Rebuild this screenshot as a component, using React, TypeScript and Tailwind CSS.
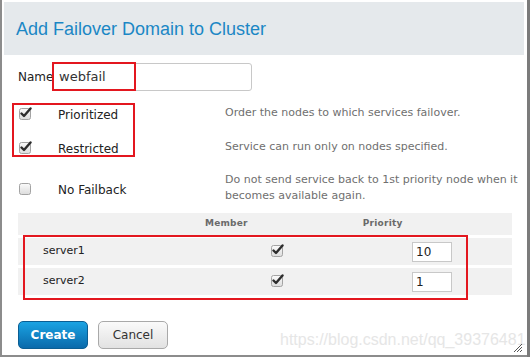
import React from "react";

function Check({ checked }: { checked: boolean }) {
  return (
    <svg width="14" height="14" viewBox="0 0 14 14" className="block">
      <defs>
        <linearGradient id="cbg" x1="0" y1="0" x2="0" y2="1">
          <stop offset="0" stopColor="#fbfbfb" />
          <stop offset="1" stopColor="#dcdcdc" />
        </linearGradient>
      </defs>
      <rect x="1.5" y="2.5" width="11" height="11" rx="2" fill="url(#cbg)" stroke="#a3a3a3" />
      {checked && (
        <path d="M3.5 7.5 L6 10 L12.5 2.5" fill="none" stroke="#2d2d2d" strokeWidth="2.4" strokeLinecap="round" strokeLinejoin="round" />
      )}
    </svg>
  );
}

const options = [
  { label: "Prioritized", checked: true, h: "h-[32px]", desc: ["Order the nodes to which services failover."] },
  { label: "Restricted", checked: true, h: "h-[36px]", desc: ["Service can run only on nodes specified."] },
  {
    label: "No Failback",
    checked: false,
    h: "h-[46px]",
    desc: ["Do not send service back to 1st priority node when it", "becomes available again."],
  },
];

const nodes = [
  { name: "server1", priority: "10" },
  { name: "server2", priority: "1" },
];

export default function App() {
  return (
    <div className="w-[530px] h-[357px] flex bg-white overflow-hidden" style={{ fontFamily: '"DejaVu Sans", sans-serif' }}>
      <div className="relative flex-1 flex flex-col border-l-2 border-b-2 border-[#8c8c8c] pt-[2px] pl-[2px] pr-[3px]">
        {/* header */}
        <div className="h-[53px] bg-[#e5e9ec] flex items-center pl-[12px]">
          <h1 className="text-[18px] text-[#1b87c5] leading-none" style={{ fontFamily: '"Liberation Sans", Arial, sans-serif' }}>
            Add Failover Domain to Cluster
          </h1>
        </div>

        {/* name */}
        <div className="relative flex items-center mt-[8px] pl-[14px] h-[28px]">
          <span className="text-[12px] text-[#222] w-[34px]">Name</span>
          <div className="w-[200px] h-[28px] border border-[#c8c8c8] rounded-[3px] flex items-center pl-[6px] text-[13px] text-[#333]">
            webfail
          </div>
          <div className="absolute left-[48px] -top-[1px] w-[84px] h-[29px] border-2 border-[#e3171f]" />
        </div>

        {/* options */}
        <div className="relative mt-[7px]">
          {options.map((o) => (
            <div key={o.label} className={`flex items-center ${o.h}`}>
              <div className="w-[54px] pl-[14px] -mt-[2px]">
                <Check checked={o.checked} />
              </div>
              <span className="text-[12px] text-[#222] w-[167px] pt-[2px]">{o.label}</span>
              <div className="text-[11px] text-[#6f6f6f] leading-[16px] -mt-[2px]">
                {o.desc.map((d) => (
                  <div key={d}>{d}</div>
                ))}
              </div>
            </div>
          ))}
          <div className="absolute left-[8px] top-[5px] w-[123px] h-[54px] border-2 border-[#e3171f]" />
        </div>

        {/* table */}
        <div className="relative ml-[14px] mr-[12px] mt-[1px]">
          <div className="h-[22px] bg-[#f1f1f1] flex items-center text-[9px] font-bold text-[#6a6a6a] tracking-wide">
            <span className="ml-[187px]">Member</span>
            <span className="ml-[115px]">Priority</span>
          </div>
          {nodes.map((n) => (
            <div key={n.name} className="h-[27px] mt-[3px] bg-[#f1f1f1] flex items-center text-[11px] text-[#222]">
              <span className="ml-[25px] w-[227px]">{n.name}</span>
              <div className="-mt-[3px]">
                <Check checked />
              </div>
              <div className="ml-[128px] w-[40px] h-[20px] bg-white border border-[#c8c8c8] flex items-center pl-[3px] text-[12px] text-[#222]">
                {n.priority}
              </div>
            </div>
          ))}
          <div className="absolute left-[5px] top-[22px] w-[445px] h-[65px] border-2 border-[#e3171f]" />
        </div>

        {/* buttons */}
        <div className="flex gap-[10px] ml-[14px] mt-[26px]">
          <button className="w-[70px] h-[28px] rounded-[5px] border border-[#0b5e93] bg-gradient-to-b from-[#1ba3e3] to-[#0a6aab] text-white text-[12px] font-bold">
            Create
          </button>
          <button className="w-[70px] h-[28px] rounded-[5px] border border-[#a9a9a9] bg-gradient-to-b from-[#fafafa] to-[#e2e2e2] text-[#333] text-[12px]">
            Cancel
          </button>
        </div>

        {/* watermark */}
        <div
          className="absolute left-[278px] top-[328px] text-[16px] text-[#e6e6e6] whitespace-nowrap"
          style={{ fontFamily: '"Liberation Sans", Arial, sans-serif' }}
        >
          https://blog.csdn.net/qq_39376481
        </div>

        {/* resize grip */}
        <svg className="absolute right-[4px] bottom-[2px]" width="10" height="10" viewBox="0 0 10 10">
          <path d="M9 1 L1 9 M9 4 L4 9 M9 7 L7 9" stroke="#555" strokeWidth="1" />
        </svg>
      </div>
      <div className="w-[3px] bg-[#7b7b7b]" />
    </div>
  );
}
